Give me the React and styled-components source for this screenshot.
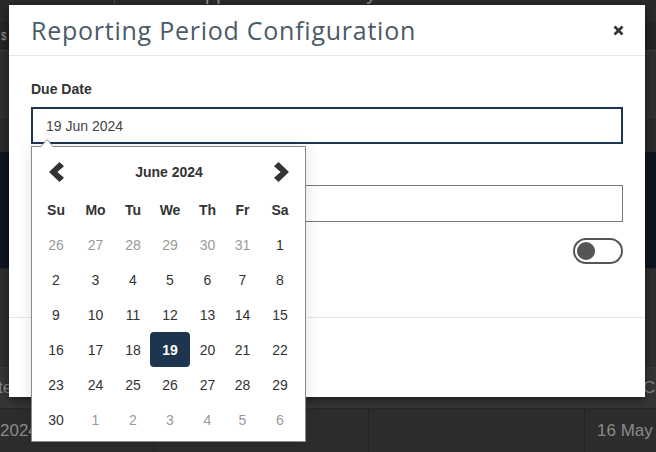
import React from "react";
import styled, { createGlobalStyle, css } from "styled-components";

const GlobalStyle = createGlobalStyle`
  html, body {
    margin: 0;
    padding: 0;
  }
  body {
    width: 656px;
    height: 452px;
    overflow: hidden;
    background: #2d2d2d;
    font-family: "Liberation Sans", Arial, sans-serif;
  }
  * {
    box-sizing: border-box;
  }
`;

const Page = styled.div`
  position: relative;
  width: 656px;
  height: 452px;
  overflow: hidden;
  background: #2d2d2d;
  color: #8a8a8a;
`;

/* ---------- dimmed page behind the modal ---------- */

const TopBar = styled.div`
  height: 22px;
  display: flex;
  align-items: flex-start;
  background: #2a2a2a;
  font-size: 20px;
  line-height: 20px;
  overflow: hidden;
`;

const TopText = styled.span`
  margin-top: -17px;
  padding: 0 12px 0 0;
  color: #8c8c8c;

  ${(p) =>
    p.divided &&
    css`
      border-left: 1px solid #555;
      padding-left: 12px;
    `}
`;

const Band = styled.div`
  height: ${(p) => p.h}px;
  background: ${(p) => p.bg};
  border-top: 1px solid ${(p) => p.line || "transparent"};
  display: flex;
  align-items: center;
  justify-content: space-between;
  font-size: 17px;
  overflow: hidden;
  white-space: nowrap;
`;

const Logo = styled.span`
  font-size: 10px;
  line-height: 10px;
  color: #9a9a9a;
  padding-left: 1px;
`;

const EdgeText = styled.span`
  color: #8a8a8a;
  margin: ${(p) => (p.right ? "0 -40px 0 0" : "0 0 0 -2px")};
`;

const TableRow = styled.div`
  height: 44px;
  display: grid;
  grid-template-columns: 153px 215px 216px 1fr;
  background: #2d2d2d;
  border-top: 1px solid #262626;
  font-size: 17px;
  white-space: nowrap;
  overflow: hidden;
`;

const Cell = styled.div`
  display: flex;
  align-items: center;
  padding-left: ${(p) => (p.first ? "0" : "12px")};
  border-left: ${(p) => (p.first ? "none" : "1px solid #242424")};
  color: #8a8a8a;
`;

/* ---------- modal ---------- */

const Modal = styled.div`
  position: absolute;
  left: 9px;
  top: 5px;
  width: 636px;
  height: 392px;
  background: #fff;
  box-shadow: 0 3px 9px rgba(0, 0, 0, 0.5);
  display: flex;
  flex-direction: column;
`;

const Header = styled.div`
  height: 51px;
  flex-shrink: 0;
  padding: 0 21px 0 22px;
  display: flex;
  align-items: center;
  justify-content: space-between;
  border-bottom: 1px solid #e5e5e5;
`;

const Title = styled.h2`
  margin: 0;
  font-family: "Open Sans", "Noto Sans", sans-serif;
  font-weight: 400;
  font-size: 25px;
  color: #4a5a67;
  letter-spacing: 0.75px;
`;

const CloseButton = styled.button`
  border: 0;
  background: none;
  padding: 0;
  width: 12px;
  height: 12px;
  display: flex;
  align-items: center;
  justify-content: center;
  cursor: pointer;
`;

const Body = styled.div`
  padding: 25px 22px 53px;
`;

const Field = styled.div`
  position: relative;
  margin-bottom: 16px;
`;

const Label = styled.label`
  display: block;
  height: 17px;
  font-size: 14px;
  font-weight: 700;
  line-height: 17px;
  color: #333;
  margin-bottom: ${(p) => (p.tight ? "8px" : "9px")};
`;

const Input = styled.div`
  height: 37px;
  display: flex;
  align-items: center;
  padding: 0 13px;
  font-size: 14px;
  color: #444;
  border: 1px solid #717d7d;

  ${(p) =>
    p.focused &&
    css`
      border: 2px solid #1d3552;
    `}
`;

const ToggleRow = styled.div`
  margin-top: 15px;
  display: flex;
  align-items: center;
  justify-content: flex-end;
`;

const Toggle = styled.div`
  width: 50px;
  height: 26px;
  border: 2px solid #555;
  border-radius: 13px;
  padding: 2px;
  display: flex;
  align-items: center;
`;

const Knob = styled.span`
  width: 18px;
  height: 18px;
  border-radius: 50%;
  background: #555;
`;

const Footer = styled.div`
  flex: 1;
  border-top: 1px solid #e5e5e5;
`;

/* ---------- date picker ---------- */

const Picker = styled.div`
  position: absolute;
  left: 0;
  top: 65px;
  z-index: 2;
  width: 275px;
  padding: 4px;
  background: #fff;
  border: 1px solid #8a8a8a;
  box-shadow: 0 2px 14px rgba(0, 0, 0, 0.12);
  font-size: 14px;
  color: #333;

  &::before,
  &::after {
    content: "";
    position: absolute;
    left: 9px;
    width: 0;
    height: 0;
    border-left: 6px solid transparent;
    border-right: 6px solid transparent;
  }
  &::before {
    top: -8px;
    border-bottom: 7px solid #8a8a8a;
  }
  &::after {
    top: -7px;
    left: 9px;
    border-bottom: 7px solid #fff;
  }
`;

const PickerHead = styled.div`
  height: 42px;
  display: flex;
  align-items: center;
  justify-content: space-between;
  padding: 0 11px 0 12px;
`;

const MonthTitle = styled.span`
  font-weight: 700;
  font-size: 14px;
  color: #333;
`;

const NavButton = styled.button`
  border: 0;
  background: none;
  padding: 0;
  width: 17px;
  height: 20px;
  display: flex;
  cursor: pointer;
`;

const Grid = styled.div`
  display: grid;
  grid-template-columns: 40px 39px 36px 38px 37px 33px 42px;
  grid-auto-rows: 35px;
  grid-template-rows: 34px;
`;

const DayName = styled.div`
  display: flex;
  align-items: center;
  justify-content: center;
  font-weight: 700;
  color: #333;
`;

const Day = styled.div`
  display: flex;
  align-items: center;
  justify-content: center;
  color: ${(p) => (p.muted ? "#999" : "#333")};
`;

const Selected = styled.span`
  flex-shrink: 0;
  width: 40px;
  height: 35px;
  display: flex;
  align-items: center;
  justify-content: center;
  border-radius: 4px;
  background: #1e3550;
  color: #fff;
  font-weight: 700;
`;

const Chevron = ({ dir }) => (
  <svg width="17" height="20" viewBox="0 0 17 20">
    <polygon
      points={
        dir === "left"
          ? "11.5,0 16,4.2 9.4,10 16,15.8 11.5,20 1,10"
          : "5.5,0 1,4.2 7.6,10 1,15.8 5.5,20 16,10"
      }
      fill="#333"
    />
  </svg>
);

const dayNames = ["Su", "Mo", "Tu", "We", "Th", "Fr", "Sa"];

const buildDays = () => {
  const days = [];
  [26, 27, 28, 29, 30, 31].forEach((d) => days.push({ d, muted: true }));
  for (let d = 1; d <= 30; d++) days.push({ d });
  for (let d = 1; d <= 6; d++) days.push({ d, muted: true });
  return days;
};

const DatePicker = () => (
  <Picker>
    <PickerHead>
      <NavButton aria-label="Previous month">
        <Chevron dir="left" />
      </NavButton>
      <MonthTitle>June 2024</MonthTitle>
      <NavButton aria-label="Next month">
        <Chevron dir="right" />
      </NavButton>
    </PickerHead>
    <Grid>
      {dayNames.map((n) => (
        <DayName key={n}>{n}</DayName>
      ))}
      {buildDays().map((day, i) => (
        <Day key={i} muted={day.muted}>
          {!day.muted && day.d === 19 ? <Selected>19</Selected> : day.d}
        </Day>
      ))}
    </Grid>
  </Picker>
);

const App = () => (
  <>
    <GlobalStyle />
    <Page>
      <TopBar>
        <TopText>Datasource</TopText>
        <TopText divided>Enter Supplier Name or Keyword</TopText>
      </TopBar>
      <Band h={28} bg="#252525">
        <Logo>$</Logo>
      </Band>
      <Band h={67} bg="#2f2f2f" line="#3a3a3a" />
      <Band h={35} bg="#2b2b2b" line="#333" />
      <Band h={116} bg="#0e1520" />
      <Band h={99} bg="#2f2f2f" line="#262626" />
      <Band h={41} bg="#363636" line="#3c3c3c">
        <EdgeText>te</EdgeText>
        <EdgeText right>Closed</EdgeText>
      </Band>
      <TableRow>
        <Cell first>2024</Cell>
        <Cell />
        <Cell />
        <Cell>16 May 2024</Cell>
      </TableRow>

      <Modal>
        <Header>
          <Title>Reporting Period Configuration</Title>
          <CloseButton aria-label="Close">
            <svg width="11" height="11" viewBox="0 0 11 11">
              <path
                d="M1.5 1.5 L9.5 9.5 M9.5 1.5 L1.5 9.5"
                stroke="#333"
                strokeWidth="2.6"
              />
            </svg>
          </CloseButton>
        </Header>
        <Body>
          <Field>
            <Label>Due Date</Label>
            <Input focused>19 Jun 2024</Input>
            <DatePicker />
          </Field>
          <Field>
            <Label tight />
            <Input />
          </Field>
          <ToggleRow>
            <Toggle>
              <Knob />
            </Toggle>
          </ToggleRow>
        </Body>
        <Footer />
      </Modal>
    </Page>
  </>
);

export default App;
